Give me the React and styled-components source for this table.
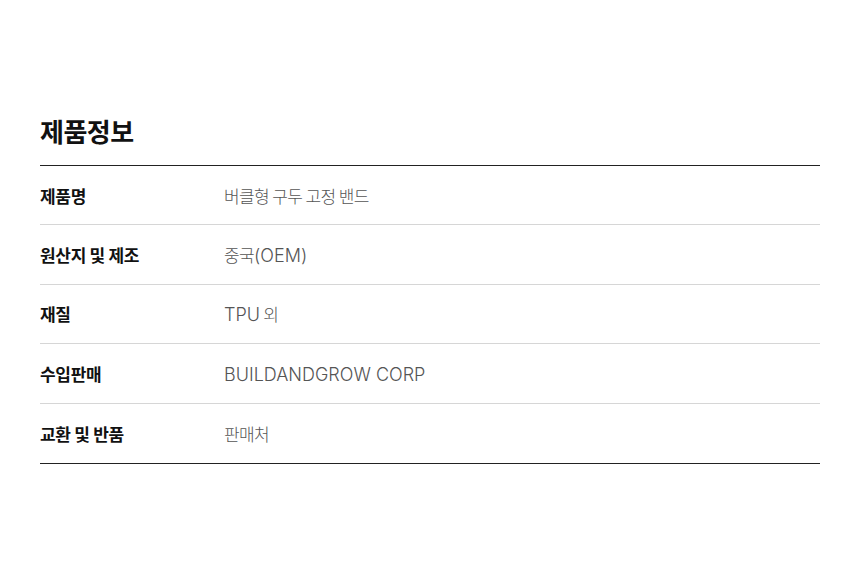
import React from "react";
import styled, { createGlobalStyle } from "styled-components";

const Global = createGlobalStyle`
  html, body { margin: 0; padding: 0; background: #fff; }
  body { font-family: "Noto Sans CJK KR", "Noto Sans", sans-serif; }
`;

const Page = styled.div`
  padding: 113px 40px 0;
`;

const Title = styled.h2`
  margin: 0 0 16px;
  font-size: 26px;
  line-height: 36px;
  font-weight: 700;
  color: #111;
  letter-spacing: -0.5px;
`;

const Table = styled.div`
  border-top: 1px solid #222;
  border-bottom: 1px solid #222;
`;

const Row = styled.div`
  display: grid;
  grid-template-columns: 184px 1fr;
  align-items: center;
  height: 59.4px;
  box-sizing: border-box;
  border-bottom: ${(p) => (p.$last ? "none" : "1px solid #d6d6d6")};
`;

const Label = styled.div`
  font-size: 17px;
  font-weight: 700;
  color: #111;
  letter-spacing: -0.3px;
`;

const Value = styled.div`
  font-family: "Noto Sans CJK KR", sans-serif;
  font-size: 17px;
  font-weight: 300;
  color: #555;
  letter-spacing: -0.6px;
`;

const Latin = styled.span`
  font-family: "Inter", "Liberation Sans", sans-serif;
  font-size: 18px;
  font-weight: 300;
  letter-spacing: 0;
`;

const rows = [
  ["제품명", "버클형 구두 고정 밴드"],
  ["원산지 및 제조", "중국(OEM)"],
  ["재질", "TPU 외"],
  ["수입판매", "BUILDANDGROW CORP"],
  ["교환 및 반품", "판매처"],
];

function renderText(text) {
  return text
    .split(/([A-Za-z()][A-Za-z() ]*[A-Za-z()]|[A-Za-z()])/)
    .filter(Boolean)
    .map((part, i) =>
      /[A-Za-z()]/.test(part) ? <Latin key={i}>{part}</Latin> : part
    );
}

export default function App() {
  return (
    <>
      <Global />
      <Page>
        <Title>제품정보</Title>
        <Table>
          {rows.map(([k, v], i) => (
            <Row key={k} $last={i === rows.length - 1}>
              <Label>{k}</Label>
              <Value>{renderText(v)}</Value>
            </Row>
          ))}
        </Table>
      </Page>
    </>
  );
}
